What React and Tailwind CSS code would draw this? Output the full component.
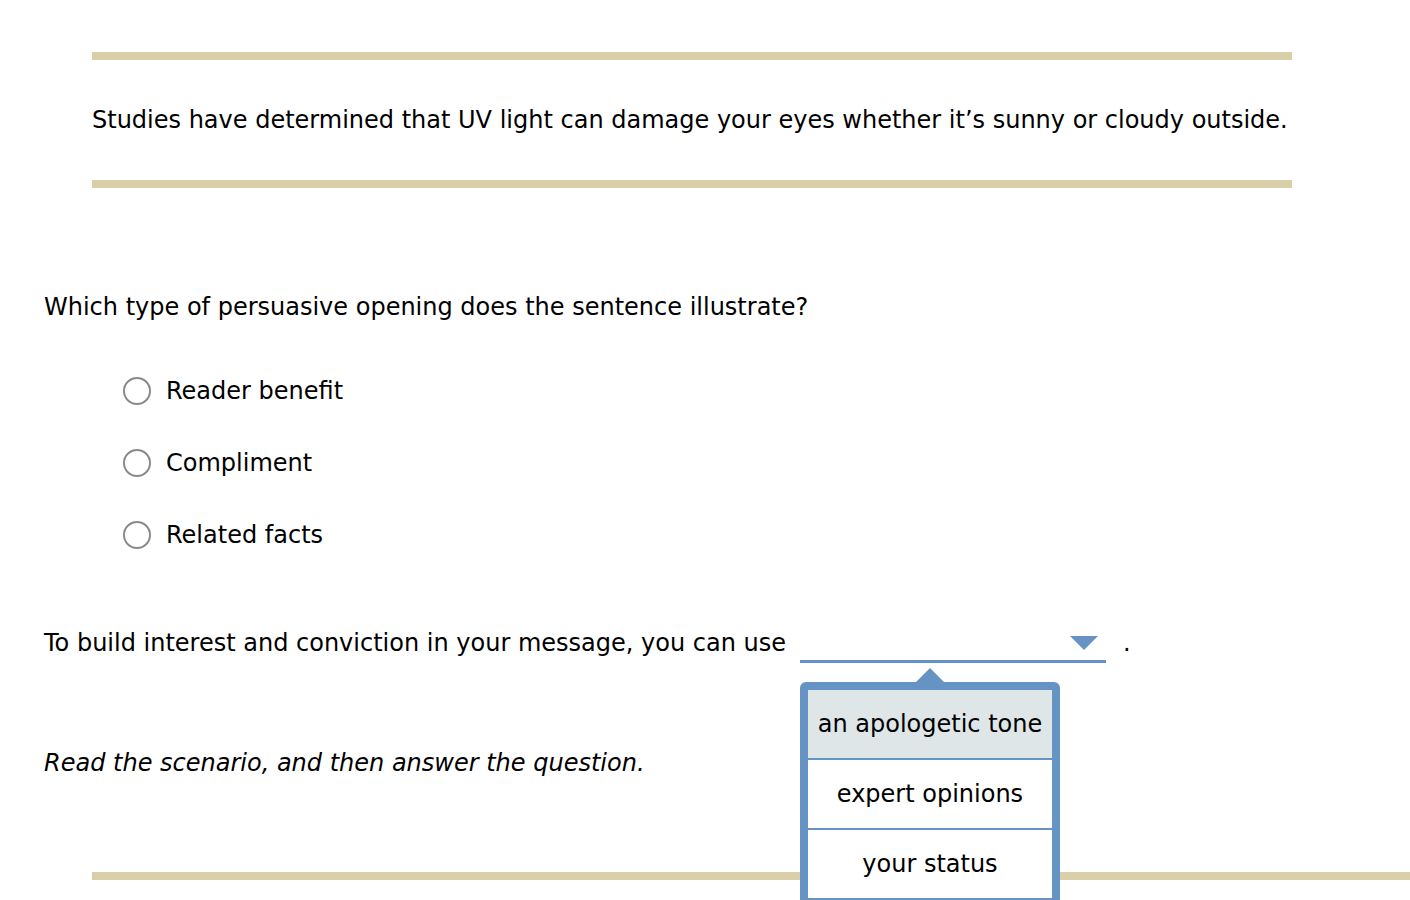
export default function App() {
  return (
    <div
      className="min-h-[900px] bg-white pt-[52px] text-[24px] leading-[28px] text-black overflow-hidden"
      style={{ fontFamily: '"DejaVu Sans", Verdana, sans-serif' }}
    >
      {/* Scenario box */}
      <div className="ml-[92px] w-[1200px]">
        <div className="h-2 bg-[#d9cfa9]" />
        <div className="h-[120px] flex items-center whitespace-nowrap">
          Studies have determined that UV light can damage your eyes whether it’s sunny or cloudy outside.
        </div>
        <div className="h-2 bg-[#d9cfa9]" />
      </div>

      {/* Question */}
      <div className="mt-[99px] ml-[44px] h-10 flex items-center">
        Which type of persuasive opening does the sentence illustrate?
      </div>

      {/* Options */}
      <div className="mt-[44px] ml-[123px] flex flex-col gap-8">
        {["Reader benefit", "Compliment", "Related facts"].map((label) => (
          <label key={label} className="h-10 flex items-center gap-[15px]">
            <span className="w-[28px] h-[28px] rounded-full border-2 border-[#8a8a8a] bg-white" />
            <span>{label}</span>
          </label>
        ))}
      </div>

      {/* Fill in */}
      <div className="mt-[68px] ml-[44px] h-10 flex items-center">
        <span className="whitespace-nowrap">To build interest and conviction in your message, you can use</span>
        <div className="relative shrink-0 ml-[14px] w-[306px] h-10 border-b-[3px] border-[#6594c4]">
          <svg className="absolute right-[8px] top-[13px]" width="28" height="14" viewBox="0 0 28 14">
            <path d="M0 0 H28 L14 14 Z" fill="#6594c4" />
          </svg>

          {/* Dropdown menu */}
          <div className="absolute left-0 top-[59px] z-10 w-[260px]">
            <svg className="absolute left-[115px] -top-[14px]" width="30" height="15" viewBox="0 0 30 15">
              <path d="M0 15 L15 0 L30 15 Z" fill="#6594c4" />
            </svg>
            <div className="rounded-t-[6px] border-8 border-[#6594c4] bg-white flex flex-col">
              <div className="h-[68px] flex items-center justify-center bg-[#dfe6e8] whitespace-nowrap">an apologetic tone</div>
              <div className="h-[70px] flex items-center justify-center border-t-2 border-[#6594c4]">expert opinions</div>
              <div className="h-[70px] flex items-center justify-center border-t-2 border-[#6594c4]">your status</div>
            </div>
          </div>
        </div>
        <span className="ml-[17px]">.</span>
      </div>

      <div className="mt-[80px] ml-[44px] h-10 flex items-center italic">
        Read the scenario, and then answer the question.
      </div>

      <div className="mt-[89px] ml-[92px] h-2 bg-[#d9cfa9]" />
    </div>
  );
}
